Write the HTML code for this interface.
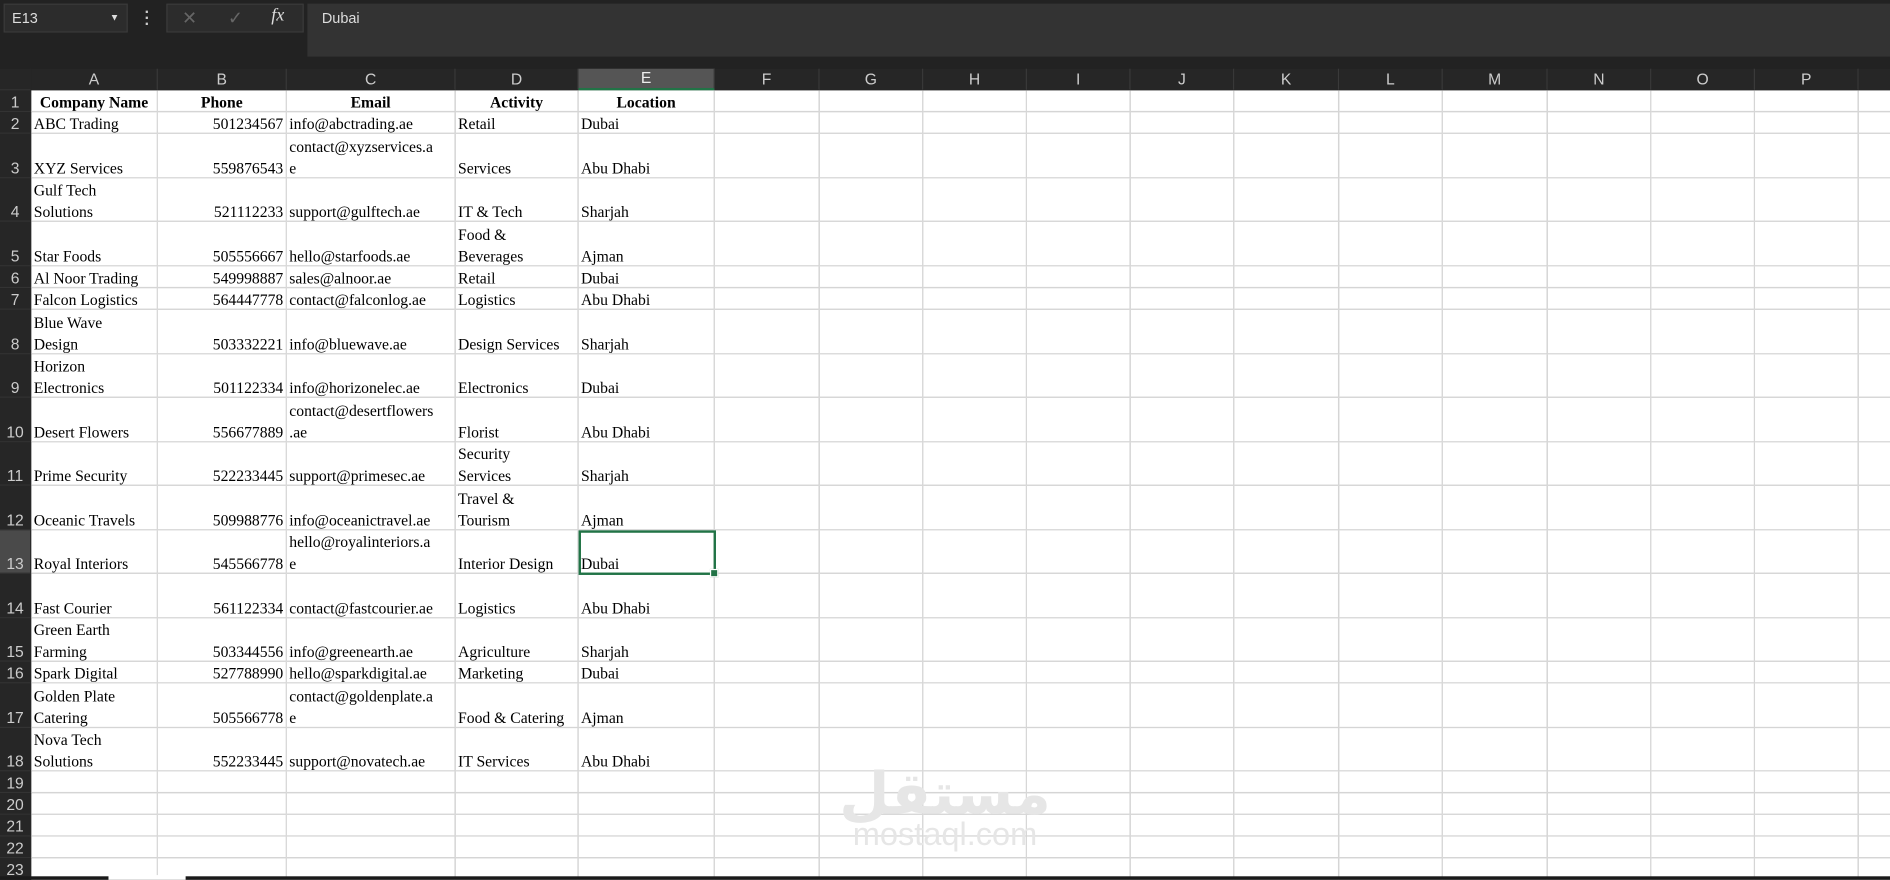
<!DOCTYPE html>
<html><head><meta charset="utf-8"><style>
html,body{margin:0;padding:0;background:#1f1f1f;overflow:hidden;width:1890px;height:880px}
#w{position:absolute;left:0;top:0;width:1568px;height:730px;transform:scale(1.20536);transform-origin:0 0;background:#222;font-family:"Liberation Sans",sans-serif;overflow:hidden}
.nb{position:absolute;left:3px;top:3px;width:103px;height:24px;background:#2c2c2c;border:1px solid #3a3a3a;box-sizing:border-box;color:#ddd;font-size:12px;line-height:22px;padding-left:6px}
.nb span{position:absolute;right:6px;top:0;font-size:8px}
.dots{position:absolute;left:120px;top:7px;color:#ccc;font-size:13px;line-height:5px;width:4px;text-align:center;font-weight:bold}
.fx{position:absolute;left:138px;top:3px;width:114px;height:24px;background:#2c2c2c;border:1px solid #3a3a3a;box-sizing:border-box;color:#666;font-size:15px}
.fb{position:absolute;left:255px;top:3px;right:0;height:44px;background:#333;color:#ddd;font-size:12px;padding:5px 0 0 12px;box-sizing:border-box}
.row{position:absolute;left:0;width:1568px;display:flex;box-sizing:border-box}
.row>div{flex:none;box-sizing:border-box;border-right:1px solid #d5d5d5;border-bottom:1px solid #d5d5d5;background:#fff;font-family:"Liberation Serif",serif;font-size:13px;line-height:18px;padding:0 2px;display:flex;flex-direction:column;justify-content:flex-end;white-space:nowrap;overflow:hidden;color:#000}
.row>div>span{position:relative;top:2px}
.row>div:first-child{background:#262626;color:#ccc;border-right:1px solid #262626;border-bottom:1px solid #333;font-family:"Liberation Sans",sans-serif;align-items:center;padding:0}
.row>div.sel{background:#4a4a4a}
.hd>div{background:#262626!important;color:#ccc;border-right:1px solid #3a3a3a;border-bottom:1px solid #262626;font-family:"Liberation Sans",sans-serif;align-items:center;justify-content:center;font-size:13px}
.hd>div.e{background:#555!important;color:#eee;border-bottom:2px solid #217346}
.n{text-align:right;align-items:flex-end}
.c{align-items:center}
#s{position:absolute;left:480px;top:440px;width:114px;height:37px;border:2px solid #217346;box-sizing:border-box}
#s i{position:absolute;right:-4px;bottom:-4px;width:5px;height:5px;background:#217346;border:1px solid #fff}
#wm{position:absolute;left:688px;top:630px;color:#e6e6e6;text-align:center;width:192px}
#bot{position:absolute;left:0;top:727px;width:1568px;height:3px;background:#1a1a1a}
#tab{position:absolute;left:90px;top:726px;width:64px;height:4px;background:#fff}
</style></head><body><div id="w">
<div class="nb">E13<span>▼</span></div>
<div class="dots">·<br>·<br>·</div>
<div class="fx"><span style="position:absolute;left:12px;top:2px">✕</span><span style="position:absolute;left:50px;top:2px">✓</span><span style="position:absolute;left:86px;top:1px;color:#ddd;font-family:'Liberation Serif',serif;font-style:italic">fx</span></div>
<div class="fb">Dubai</div>
<div id="g"></div>
<div id="s"><i></i></div>
<div id="wm"><div style="font-family:'Noto Sans CJK SC','DejaVu Sans',sans-serif;font-size:48px;font-weight:bold;line-height:48px">مستقل</div><div style="font-size:27px;line-height:28px">mostaql.com</div></div>
<div id="bot"></div><div id="tab"></div>
</div>
<script>
var W=[26,105,107,140,102,113,87,86,86,86,86,87,86,87,86,86,86,30];
var T=[75,93,111,148,184,221,239,257,294,330,367,403,440,476,513,549,567,604,640,658,676,694,712,730,748];
var D=[
["<b>Company Name</b>","<b>Phone</b>","<b>Email</b>","<b>Activity</b>","<b>Location</b>"],
["ABC Trading","501234567","info@abctrading.ae","Retail","Dubai"],
["XYZ Services","559876543","contact@xyzservices.a<br>e","Services","Abu Dhabi"],
["Gulf Tech<br>Solutions","521112233","support@gulftech.ae","IT &amp; Tech","Sharjah"],
["Star Foods","505556667","hello@starfoods.ae","Food &amp;<br>Beverages","Ajman"],
["Al Noor Trading","549998887","sales@alnoor.ae","Retail","Dubai"],
["Falcon Logistics","564447778","contact@falconlog.ae","Logistics","Abu Dhabi"],
["Blue Wave<br>Design","503332221","info@bluewave.ae","Design Services","Sharjah"],
["Horizon<br>Electronics","501122334","info@horizonelec.ae","Electronics","Dubai"],
["Desert Flowers","556677889","contact@desertflowers<br>.ae","Florist","Abu Dhabi"],
["Prime Security","522233445","support@primesec.ae","Security<br>Services","Sharjah"],
["Oceanic Travels","509988776","info@oceanictravel.ae","Travel &amp;<br>Tourism","Ajman"],
["Royal Interiors","545566778","hello@royalinteriors.a<br>e","Interior Design","Dubai"],
["Fast Courier","561122334","contact@fastcourier.ae","Logistics","Abu Dhabi"],
["Green Earth<br>Farming","503344556","info@greenearth.ae","Agriculture","Sharjah"],
["Spark Digital","527788990","hello@sparkdigital.ae","Marketing","Dubai"],
["Golden Plate<br>Catering","505566778","contact@goldenplate.a<br>e","Food &amp; Catering","Ajman"],
["Nova Tech<br>Solutions","552233445","support@novatech.ae","IT Services","Abu Dhabi"]];
var h='<div class="row hd" style="top:57px;height:18px">';
var L=["","A","B","C","D","E","F","G","H","I","J","K","L","M","N","O","P",""];
for(var j=0;j<W.length;j++)h+='<div'+(j==5?' class="e"':'')+' style="width:'+W[j]+'px">'+L[j]+'</div>';
h+='</div>';
for(var i=0;i<23;i++){
 h+='<div class="row" style="top:'+T[i]+'px;height:'+(T[i+1]-T[i])+'px">';
 for(var j=0;j<W.length;j++){
  var c='',t='';
  if(j==0){t=i+1;if(i==12)c='sel';}
  else if(j<=5&&D[i]){t=D[i][j-1];if(i==0)c='c';else if(j==2)c='n';}
  h+='<div class="'+c+'" style="width:'+W[j]+'px"><span>'+t+'</span></div>';
 }
 h+='</div>';
}
document.getElementById('g').innerHTML=h;
</script>
</body></html>
